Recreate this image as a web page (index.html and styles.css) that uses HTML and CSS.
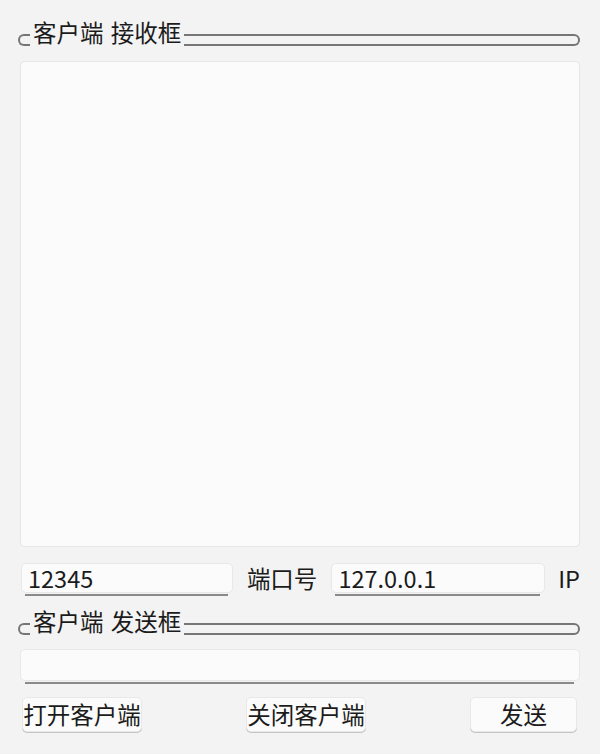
FILE: index.html
```html
<!DOCTYPE html>
<html lang="zh">
<head>
<meta charset="utf-8">
<title>客户端</title>
<link rel="stylesheet" href="styles.css">
</head>
<body>
<div class="app">
  <div class="group-head head-recv">
    <div class="cap"></div>
    <div class="gtitle">客户端 接收框</div>
    <div class="gline"></div>
  </div>
  <div class="recv"></div>
  <div class="row">
    <div class="field f-port">
      <div class="box">12345</div>
      <div class="under"></div>
    </div>
    <div class="label l-port">端口号</div>
    <div class="field f-ip">
      <div class="box">127.0.0.1</div>
      <div class="under"></div>
    </div>
    <div class="label l-ip">IP</div>
  </div>
  <div class="group-head head-send">
    <div class="cap"></div>
    <div class="gtitle">客户端 发送框</div>
    <div class="gline"></div>
  </div>
  <div class="field f-send">
    <div class="box box-send"></div>
    <div class="under"></div>
  </div>
  <div class="buttons">
    <div class="btn">打开客户端</div>
    <div class="btn">关闭客户端</div>
    <div class="btn btn-send">发送</div>
  </div>
</div>
</body>
</html>
```
FILE: styles.css
```css
html, body {
  margin: 0;
  padding: 0;
  background: #f3f3f3;
}
body {
  width: 600px;
  height: 754px;
  overflow: hidden;
  font-family: "Noto Sans CJK SC", "Noto Sans", sans-serif;
  font-size: 23.5px;
  color: #1b1b1b;
}
.app {
  display: flex;
  flex-direction: column;
  padding: 0 20px 0 18px;
}
.group-head {
  display: flex;
  align-items: flex-end;
  height: 26px;
}
.head-recv { margin-top: 20px; }
.head-send { margin-top: 13px; }
.cap {
  width: 10px;
  height: 8px;
  border: 2px solid #767676;
  border-right: none;
  border-radius: 6px 0 0 6px;
  flex: none;
}
.gtitle {
  line-height: 26px;
  height: 26px;
  margin: 0 3px 0 3px;
  white-space: nowrap;
  word-spacing: 2px;
  position: relative;
  top: -1px;
}
.gline {
  flex: 1;
  height: 8px;
  border: 2px solid #767676;
  border-left: none;
  border-radius: 0 6px 6px 0;
}
.recv {
  margin-top: 15px;
  margin-left: 2px;
  height: 484px;
  background: #fbfbfb;
  border: 1px solid #e6e6e6;
  border-radius: 5px;
}
.row {
  display: flex;
  align-items: flex-start;
  margin-top: 16px;
  margin-left: 3px;
}
.field {
  display: flex;
  flex-direction: column;
}
.box {
  height: 30px;
  background: #fbfbfb;
  border: 1px solid #e8e8e8;
  border-radius: 5px;
  box-sizing: border-box;
  padding-left: 6px;
  line-height: 28px;
}
.under {
  height: 2px;
  background: #8a8a8a;
  margin: 1px 5px 0 4px;
}
.f-port { width: 214px; }
.f-ip { width: 216px; }
.label {
  line-height: 30px;
  white-space: nowrap;
}
.l-port { margin: 0 14px; }
.l-ip { margin-left: 13px; }
.f-send {
  margin-top: 14px;
  margin-left: 2px;
}
.box-send { height: 32px; }
.f-send .under { margin: 1px 6px 0 5px; }
.buttons {
  display: flex;
  gap: 104px;
  margin-top: 13px;
  margin-left: 4px;
}
.btn {
  width: 120px;
  height: 35px;
  box-sizing: border-box;
  background: #fbfbfb;
  border: 1px solid #e8e8e8;
  border-radius: 5px;
  box-shadow: 0 1px 0 #c4c4c4;
  text-align: center;
  line-height: 32px;
  white-space: nowrap;
}
.btn-send { width: 107px; }
```
